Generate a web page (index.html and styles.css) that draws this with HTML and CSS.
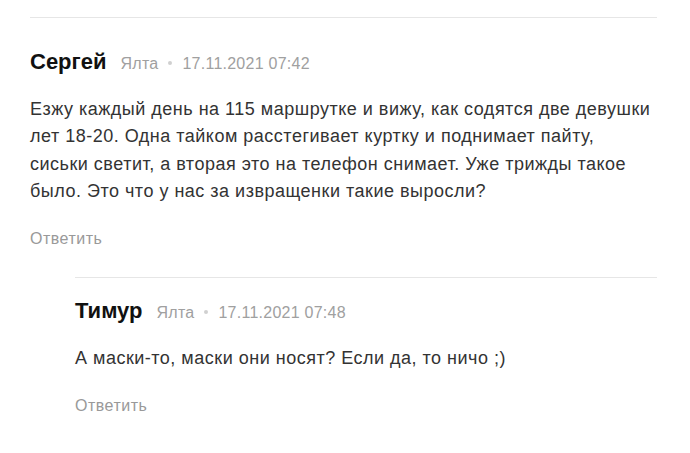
FILE: index.html
```html
<!DOCTYPE html>
<html lang="ru">
<head>
<meta charset="utf-8">
<link rel="stylesheet" href="styles.css">
</head>
<body>
<div class="thread">
  <div class="comment">
    <div class="head">
      <span class="name">Сергей</span>
      <span class="city">Ялта</span>
      <span class="dot"></span>
      <span class="date">17.11.2021 07:42</span>
    </div>
    <p class="text">Езжу каждый день на 115 маршрутке и вижу, как содятся две девушки лет 18-20. Одна тайком расстегивает куртку и поднимает пайту, сиськи светит, а вторая это на телефон снимает. Уже трижды такое было. Это что у нас за извращенки такие выросли?</p>
    <div class="reply">Ответить</div>
  </div>
  <div class="comment child">
    <div class="head">
      <span class="name">Тимур</span>
      <span class="city">Ялта</span>
      <span class="dot"></span>
      <span class="date">17.11.2021 07:48</span>
    </div>
    <p class="text">А маски-то, маски они носят? Если да, то ничо ;)</p>
    <div class="reply">Ответить</div>
  </div>
</div>
</body>
</html>
```
FILE: styles.css
```css
html, body {
  margin: 0;
  padding: 0;
  background: #fff;
}
body {
  font-family: "Liberation Sans", Arial, sans-serif;
  color: #222;
}
.thread {
  padding: 17px 33px 0 30px;
}
.comment {
  border-top: 1px solid #e6e6e6;
  padding-top: 30px;
  padding-bottom: 29px;
}
.child {
  margin-left: 45px;
  padding-top: 19px;
}
.head {
  display: flex;
  align-items: baseline;
  line-height: 28px;
}
.name {
  font-size: 22px;
  font-weight: bold;
  color: #111;
  margin-right: 14px;
}
.city, .date {
  font-size: 16px;
  color: #a0a0a0;
  letter-spacing: 0.25px;
}
.dot {
  width: 4px;
  height: 4px;
  border-radius: 50%;
  background: #d0d0d0;
  margin: 0 10px;
  align-self: center;
}
.text {
  margin: 18px 0 0;
  font-size: 18px;
  line-height: 27.3px;
  letter-spacing: 0.5px;
  color: #333;
}
.reply {
  margin-top: 25px;
  font-size: 16px;
  letter-spacing: 0.5px;
  color: #999;
}
```
